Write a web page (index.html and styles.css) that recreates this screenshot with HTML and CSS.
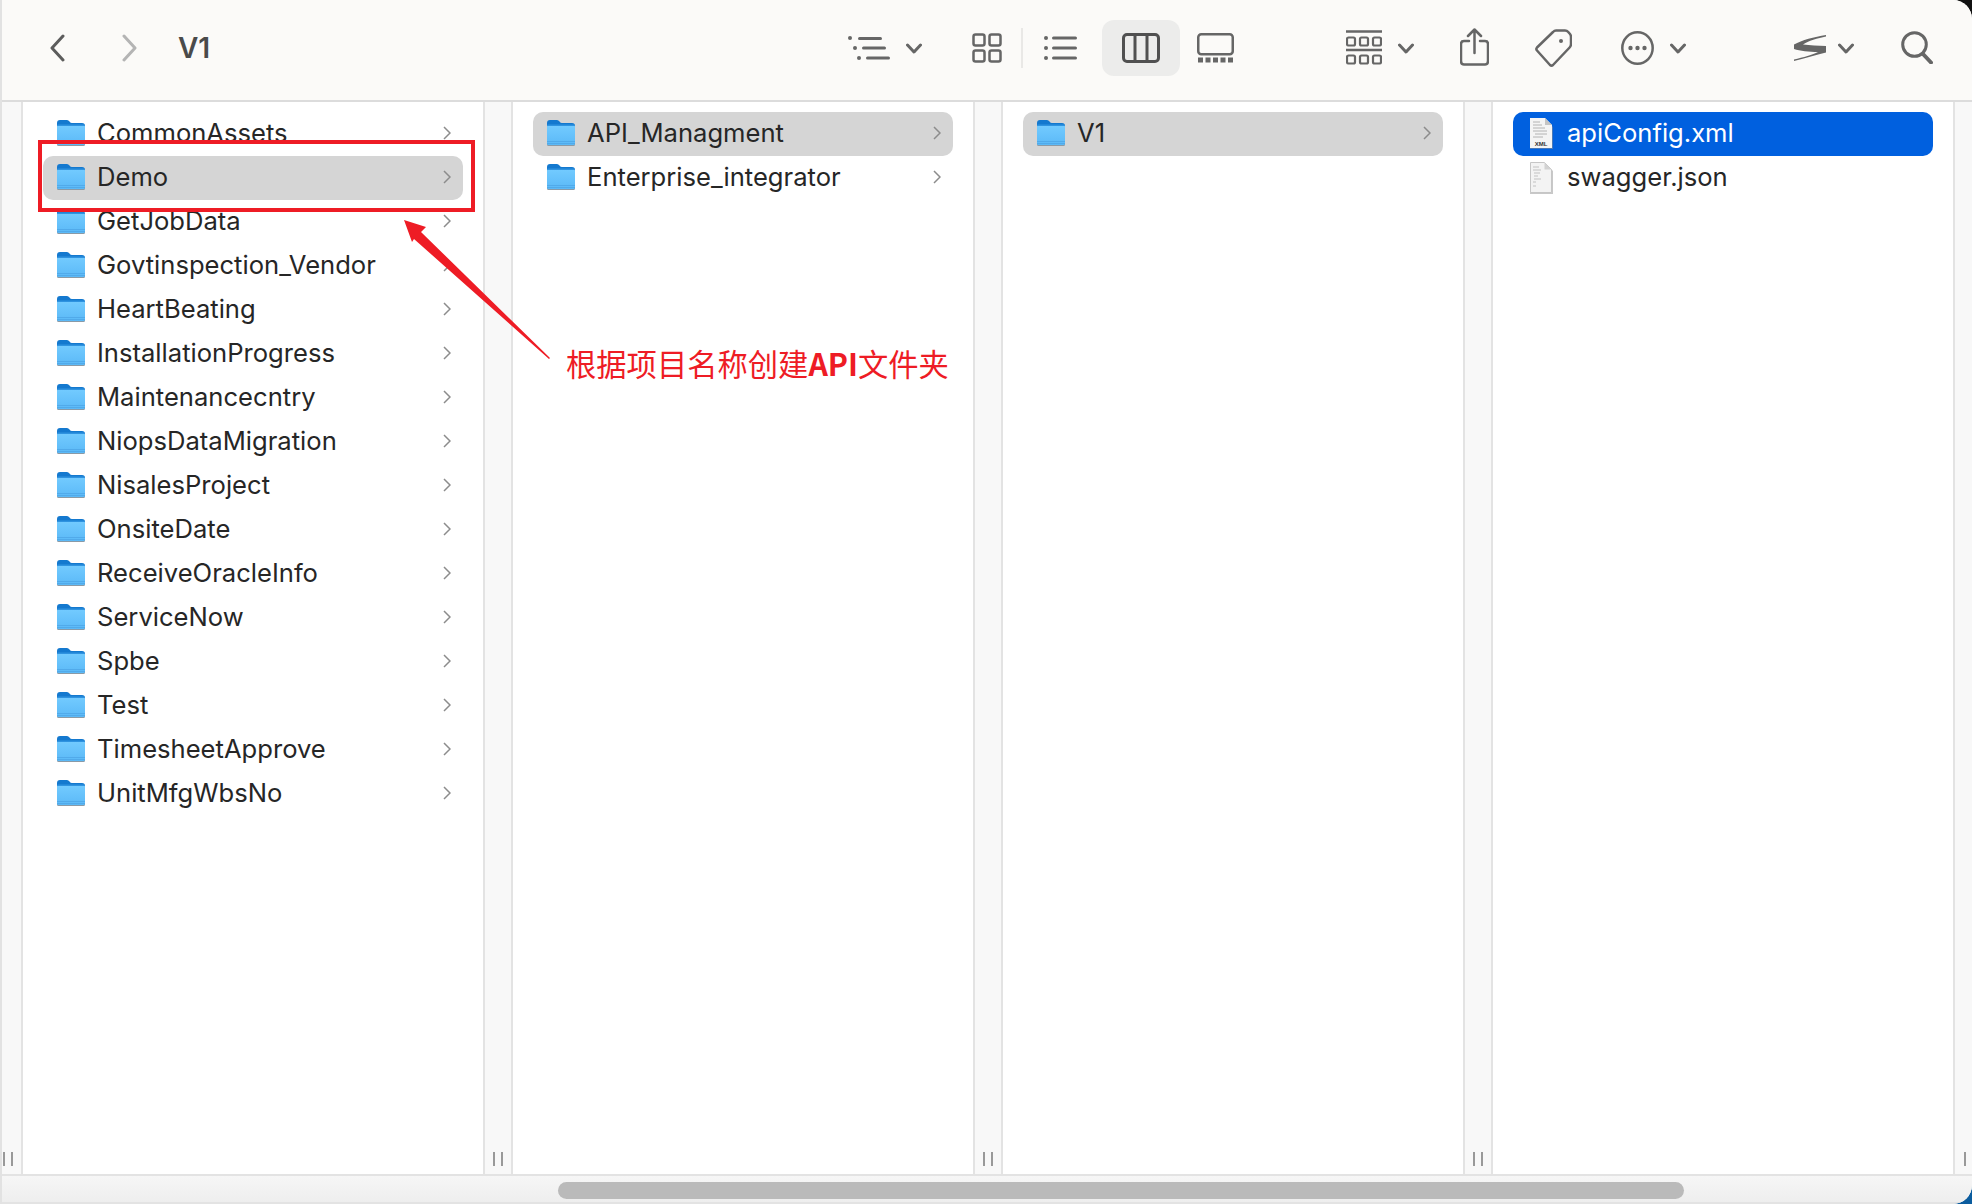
FILE: index.html
```html
<!DOCTYPE html>
<html lang="en">
<head>
	<meta charset="utf-8">
	<title>V1</title>
	<link rel="stylesheet" href="styles.css">
</head>
<body>
	<svg class="sprite" width="0" height="0">
		<defs>
			<linearGradient id="folderBody" x1="0" y1="0" x2="0" y2="1">
				<stop offset="0" stop-color="#73cbff"/>
				<stop offset="1" stop-color="#5bb9f7"/>
			</linearGradient>
			<symbol id="folder" viewBox="0 0 28 28">
				<path d="M0 4q0-3 3-3h7q1.500 0 2.500 1.500t2.500 1.500h10q3 0 3 3v3H0z" fill="#1479cf"/>
				<rect x="0" y="6" width="28" height="21" rx="1.500" fill="#8a9aa6"/>
				<rect x="0" y="6" width="28" height="20" rx="1.500" fill="url(#folderBody)"/>
				<path d="M0 6.500q0-1 1.500-1h25q1.500 0 1.500 1V7H0z" fill="#2f93e0"/>
				<path d="M0 22.500h28M0 24.500h28" stroke="#4ea6e6" stroke-width=".8"/>
			</symbol>
			<symbol id="chev" viewBox="0 0 8 14">
				<path d="M1 1l6 6-6 6" fill="none" stroke="#8c8c8c" stroke-width="1.500"/>
			</symbol>
			<symbol id="down" viewBox="0 0 16 11">
				<path d="M1.500 2l6.500 7 6.500-7" fill="none" stroke="#666" stroke-width="3" stroke-linecap="round" stroke-linejoin="round"/>
			</symbol>
		</defs>
	</svg>

	<div class="window">
		<header class="toolbar">
			<svg class="nav-btn" width="16" height="28" viewBox="0 0 16 28"><path d="M14 2L3 14l11 12" fill="none" stroke="#5c5c5c" stroke-width="3" stroke-linecap="round" stroke-linejoin="round"/></svg>
			<svg class="nav-btn nav-forward" width="16" height="28" viewBox="0 0 16 28"><path d="M2 2l11 12L2 26" fill="none" stroke="#b4b4b4" stroke-width="3" stroke-linecap="round" stroke-linejoin="round"/></svg>
			<h1 class="path-title">V1</h1>

			<svg class="tool tool-first" width="42" height="26" viewBox="0 0 42 26" fill="#666"><circle cx="2" cy="3" r="2"/><rect x="10" y="2" width="24" height="3" rx="1.500"/><circle cx="7" cy="13" r="2"/><rect x="14" y="11.500" width="24" height="3" rx="1.500"/><circle cx="11" cy="23" r="2"/><rect x="18" y="21.500" width="24" height="3" rx="1.500"/></svg>
			<svg class="tool caret" width="16" height="11"><use href="#down"/></svg>
			<svg class="tool tool-grid" width="30" height="30" viewBox="0 0 30 30" fill="none" stroke="#666" stroke-width="2.500"><rect x="1.500" y="1.500" width="11" height="11" rx="2"/><rect x="17.500" y="1.500" width="11" height="11" rx="2"/><rect x="1.500" y="17.500" width="11" height="11" rx="2"/><rect x="17.500" y="17.500" width="11" height="11" rx="2"/></svg>
			<span class="tool-sep"></span>
			<svg class="tool tool-list" width="33" height="26" viewBox="0 0 33 26" fill="#666"><circle cx="2" cy="3" r="2"/><rect x="8" y="1.500" width="25" height="3" rx="1.500"/><circle cx="2" cy="13" r="2"/><rect x="8" y="11.500" width="25" height="3" rx="1.500"/><circle cx="2" cy="23" r="2"/><rect x="8" y="21.500" width="25" height="3" rx="1.500"/></svg>
			<div class="view-active">
				<svg width="38" height="30" viewBox="0 0 38 30" fill="none" stroke="#505050" stroke-width="3"><rect x="1.500" y="1.500" width="35" height="27" rx="3.500"/><path d="M13 1.500v27M25 1.500v27"/></svg>
			</div>
			<svg class="tool tool-gallery" width="37" height="30" viewBox="0 0 37 30"><rect x="1.250" y="1.250" width="34.500" height="20" rx="3" fill="none" stroke="#666" stroke-width="2.500"/><path d="M1 27h35" stroke="#666" stroke-width="5" stroke-dasharray="5 2.500"/></svg>
			<svg class="tool tool-group" width="36" height="35" viewBox="0 0 36 35"><path d="M0 1.500h36M0 20h36" stroke="#666" stroke-width="2.500"/><g fill="none" stroke="#666" stroke-width="2.200"><rect x="1" y="7.500" width="8" height="8" rx="1.500"/><rect x="14" y="7.500" width="8" height="8" rx="1.500"/><rect x="27" y="7.500" width="8" height="8" rx="1.500"/><rect x="1" y="25.500" width="8" height="8" rx="1.500"/><rect x="14" y="25.500" width="8" height="8" rx="1.500"/><rect x="27" y="25.500" width="8" height="8" rx="1.500"/></g></svg>
			<svg class="tool caret" width="16" height="11"><use href="#down"/></svg>
			<svg class="tool tool-share" width="29" height="38" viewBox="0 0 29 38" fill="none" stroke="#666" stroke-width="2.500" stroke-linecap="round" stroke-linejoin="round"><path d="M9 13H4q-3 0-3 3v17q0 3.500 3 3.500h21q3 0 3-3.500V16q0-3-3-3h-5"/><path d="M14.500 25V2M8 8l6.500-6.500L21 8"/></svg>
			<svg class="tool tool-tag" width="37" height="38" viewBox="0 0 37 38" fill="none" stroke="#666" stroke-width="2.500" stroke-linejoin="round"><path d="M21 1.500h9q2 0 3 1.200l2 2.300q1 1.200 1 3V15q0 2-1.400 3.500L18 36q-1.500 1.300-3 0L2 21.500q-1.300-1.500 0-3L18 3q1.400-1.500 3-1.500z"/><circle cx="26" cy="12" r="2" fill="#666" stroke="none"/></svg>
			<svg class="tool tool-more" width="33" height="34" viewBox="0 0 33 34"><ellipse cx="16.500" cy="17" rx="15.200" ry="15.700" fill="none" stroke="#666" stroke-width="2.500"/><g fill="#666"><circle cx="9.500" cy="17" r="2.200"/><circle cx="16.500" cy="17" r="2.200"/><circle cx="23.500" cy="17" r="2.200"/></g></svg>
			<svg class="tool caret" width="16" height="11"><use href="#down"/></svg>
			<svg class="tool tool-scan" width="32" height="26" viewBox="0 0 32 26"><path d="M0 9.500C8 5 20 2 32 0v1.500C24 3 14 6 9 9.500 16 10.500 24 10.500 32 11v6.500C22 20 10 23.500 0 26v-1.500c9-2 19-5 24-7.500-9 0-18-1-24-3z" fill="#666"/></svg>
			<svg class="tool caret tool-scan-caret" width="16" height="11"><use href="#down"/></svg>
			<svg class="tool tool-search" width="32" height="33" viewBox="0 0 32 33" fill="none" stroke="#666" stroke-linecap="round"><circle cx="13.500" cy="13.500" r="11.800" stroke-width="3"/><path d="M22 23l8 8.500" stroke-width="4"/></svg>
		</header>

		<main class="browser">
			<div class="resizer resizer-first"><i></i><i></i></div>

			<section class="column">
				<div class="row"><svg class="ico"><use href="#folder"/></svg><span class="name">CommonAssets</span><svg class="arrow"><use href="#chev"/></svg></div>
				<div class="row row-open"><svg class="ico"><use href="#folder"/></svg><span class="name">Demo</span><svg class="arrow"><use href="#chev"/></svg></div>
				<div class="row"><svg class="ico"><use href="#folder"/></svg><span class="name">GetJobData</span><svg class="arrow"><use href="#chev"/></svg></div>
				<div class="row"><svg class="ico"><use href="#folder"/></svg><span class="name">Govtinspection_Vendor</span><svg class="arrow"><use href="#chev"/></svg></div>
				<div class="row"><svg class="ico"><use href="#folder"/></svg><span class="name">HeartBeating</span><svg class="arrow"><use href="#chev"/></svg></div>
				<div class="row"><svg class="ico"><use href="#folder"/></svg><span class="name">InstallationProgress</span><svg class="arrow"><use href="#chev"/></svg></div>
				<div class="row"><svg class="ico"><use href="#folder"/></svg><span class="name">Maintenancecntry</span><svg class="arrow"><use href="#chev"/></svg></div>
				<div class="row"><svg class="ico"><use href="#folder"/></svg><span class="name">NiopsDataMigration</span><svg class="arrow"><use href="#chev"/></svg></div>
				<div class="row"><svg class="ico"><use href="#folder"/></svg><span class="name">NisalesProject</span><svg class="arrow"><use href="#chev"/></svg></div>
				<div class="row"><svg class="ico"><use href="#folder"/></svg><span class="name">OnsiteDate</span><svg class="arrow"><use href="#chev"/></svg></div>
				<div class="row"><svg class="ico"><use href="#folder"/></svg><span class="name">ReceiveOracleInfo</span><svg class="arrow"><use href="#chev"/></svg></div>
				<div class="row"><svg class="ico"><use href="#folder"/></svg><span class="name">ServiceNow</span><svg class="arrow"><use href="#chev"/></svg></div>
				<div class="row"><svg class="ico"><use href="#folder"/></svg><span class="name">Spbe</span><svg class="arrow"><use href="#chev"/></svg></div>
				<div class="row"><svg class="ico"><use href="#folder"/></svg><span class="name">Test</span><svg class="arrow"><use href="#chev"/></svg></div>
				<div class="row"><svg class="ico"><use href="#folder"/></svg><span class="name">TimesheetApprove</span><svg class="arrow"><use href="#chev"/></svg></div>
				<div class="row"><svg class="ico"><use href="#folder"/></svg><span class="name">UnitMfgWbsNo</span><svg class="arrow"><use href="#chev"/></svg></div>
			</section>
			<div class="resizer"><i></i><i></i></div>

			<section class="column">
				<div class="row row-open"><svg class="ico"><use href="#folder"/></svg><span class="name">API_Managment</span><svg class="arrow"><use href="#chev"/></svg></div>
				<div class="row"><svg class="ico"><use href="#folder"/></svg><span class="name">Enterprise_integrator</span><svg class="arrow"><use href="#chev"/></svg></div>
			</section>
			<div class="resizer"><i></i><i></i></div>

			<section class="column">
				<div class="row row-open"><svg class="ico"><use href="#folder"/></svg><span class="name">V1</span><svg class="arrow"><use href="#chev"/></svg></div>
			</section>
			<div class="resizer"><i></i><i></i></div>

			<section class="column">
				<div class="row row-selected">
					<svg class="ico ico-doc" viewBox="0 0 28 32">
						<path d="M3 1h15l8 8v22H3z" fill="#8f8f8f" opacity=".5"/>
						<path d="M3 0h15l7 7v23H3z" fill="#f4f4f4"/>
						<path d="M18 0l7 7h-7z" fill="#c4c4c4"/>
						<path d="M6 4h7M6 7h9M6 10h12M6 13h14M8 16h12M6 19h10" stroke="#a3a3a3" stroke-width=".8"/>
						<text x="14" y="28" class="doc-label">XML</text>
					</svg>
					<span class="name">apiConfig.xml</span>
				</div>
				<div class="row">
					<svg class="ico ico-doc" viewBox="0 0 28 32">
						<path d="M3 1h15l8 8v23H3z" fill="#9a9a9a" opacity=".55"/>
						<path d="M3.500.5h14l7 7v23h-21z" fill="#f3f3f3" stroke="#c6c6c6"/>
						<path d="M17.500.5l7 7h-7z" fill="#d2d2d2"/>
						<path d="M6 5h6M6 8h8M7 11h6M7 14h4M7 17h7M6 20h3M6 24h3" stroke="#b4b4b4" stroke-width=".8"/>
					</svg>
					<span class="name">swagger.json</span>
				</div>
			</section>
			<div class="resizer resizer-last"><i></i><i></i></div>
		</main>

		<footer class="scrollbar"><div class="scroll-thumb"></div></footer>

		<!-- red markup drawn on top of the finder window -->
		<div class="mark-box"></div>
		<svg class="mark-arrow" width="160" height="150" viewBox="0 0 160 150">
			<path d="M2 2L24 9 19 14 148 140 147 141 12 21 10 24z" fill="#ee1c25"/>
		</svg>
		<div class="mark-note">根据项目名称创建<b>API</b>文件夹</div>
	</div>
</body>
</html>
```

FILE: styles.css
```css
* {
	box-sizing: border-box;
	margin: 0;
	padding: 0;
}
html, body {
	height: 100%;
}
body {
	background: linear-gradient(#111 50%, #0b5c9e 50%);
	font-family: Inter, "Noto Sans", sans-serif;
	overflow: hidden;
}
.sprite {
	position: absolute;
}

.window {
	position: relative;
	display: flex;
	flex-direction: column;
	height: 1204px;
	background: #fff;
	border-left: 2px solid #e2e2e2;
	border-radius: 0 19px 19px 0;
	overflow: hidden;
}

/* toolbar */
.toolbar {
	display: flex;
	align-items: center;
	flex: 0 0 102px;
	padding: 0 39px 5px 47px;
	background: #fbfaf8;
	border-bottom: 2px solid #dcdcdc;
}
.nav-forward {
	margin-left: 57px;
}
.path-title {
	margin-left: 40px;
	font-size: 28px;
	font-weight: 600;
	color: #4a4a4a;
}
.tool {
	flex: none;
}
.tool-first {
	margin-left: auto;
}
.caret {
	margin-left: 16px;
	margin-top: 2px;
}
.tool-grid {
	margin-left: 50px;
}
.tool-sep {
	width: 2px;
	height: 40px;
	margin-left: 19px;
	background: #e9e8e6;
}
.tool-list {
	margin-left: 21px;
}
.view-active {
	display: flex;
	align-items: center;
	justify-content: center;
	width: 78px;
	height: 56px;
	margin-left: 25px;
	background: #ececeb;
	border-radius: 12px;
}
.tool-gallery {
	margin-left: 17px;
}
.tool-group {
	margin-left: 112px;
}
.tool-share {
	margin-left: 46px;
	margin-top: -2px;
}
.tool-tag {
	margin-left: 46px;
}
.tool-more {
	margin-left: 49px;
}
.tool-scan {
	margin-left: 108px;
}
.tool-scan-caret {
	margin-left: 12px;
}
.tool-search {
	margin-left: 47px;
}

/* columns */
.browser {
	display: flex;
	flex: 1;
	min-height: 0;
}
.column {
	flex: 0 0 460px;
	padding: 10px 20px 0 20px;
}
.row {
	display: flex;
	align-items: center;
	height: 44px;
	padding: 0 12px 2px 14px;
	border-radius: 10px;
	font-size: 25.6px;
	color: #262626;
}
.row-open {
	background: #d5d5d5;
}
.row-selected {
	background: #0060df;
	color: #fff;
}
.ico {
	flex: none;
	width: 28px;
	height: 28px;
	margin-right: 12px;
}
.ico-doc {
	height: 32px;
	margin-top: 2px;
}
.name {
	flex: 1;
	padding-bottom: 2px;
	white-space: nowrap;
}
.arrow {
	flex: none;
	width: 8px;
	height: 14px;
}
.doc-label {
	font-family: "Liberation Sans", sans-serif;
	font-size: 6px;
	font-weight: bold;
	text-anchor: middle;
	fill: #333;
}

.resizer {
	display: flex;
	flex: 0 0 30px;
	align-items: flex-end;
	justify-content: center;
	gap: 6px;
	padding-bottom: 8px;
	background: #f8f8f8;
	border-left: 2px solid #e3e3e3;
	border-right: 2px solid #e3e3e3;
}
.resizer i {
	width: 2px;
	height: 14px;
	background: #999;
}
.resizer-first {
	flex-basis: 21px;
	justify-content: flex-start;
	padding-left: 1px;
	border-left: 0;
}
.resizer-last {
	flex-basis: 20px;
	justify-content: flex-start;
	padding-left: 9px;
	border-right: 0;
}

/* bottom scroller */
.scrollbar {
	flex: 0 0 30px;
	padding: 6px 0 0 556px;
	background: linear-gradient(#f6f6f6, #eeeeee);
	border-top: 2px solid #e3e3e3;
	border-bottom: 2px solid #e3e3e3;
}
.scroll-thumb {
	width: 1126px;
	height: 17px;
	background: #bababa;
	border-radius: 9px;
}

/* red markup */
.mark-box {
	position: absolute;
	left: 36px;
	top: 140px;
	width: 437px;
	height: 72px;
	border: 4px solid #ee1c25;
}
.mark-arrow {
	position: absolute;
	left: 400px;
	top: 218px;
}
.mark-note {
	position: absolute;
	left: 564px;
	top: 342px;
	font-family: "Noto Sans CJK SC", sans-serif;
	font-size: 30.3px;
	line-height: 42px;
	color: #ee1c25;
	white-space: nowrap;
}
```
